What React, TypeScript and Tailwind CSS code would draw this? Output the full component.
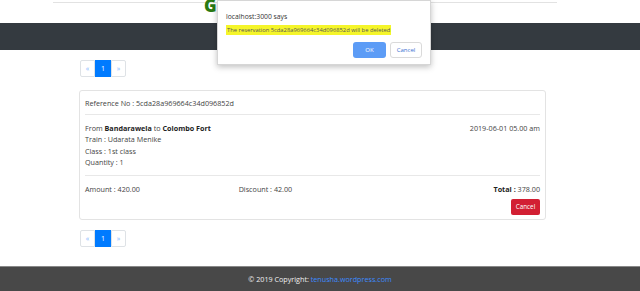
import React from 'react';

const Pagination = () => (
  <div className="flex h-[17px] w-[46px] text-[7px] leading-none">
    <span className="flex w-[15px] items-center justify-center rounded-l-[2px] border border-[#dee2e6] text-[#7fb5ff]">«</span>
    <span className="flex w-[16px] items-center justify-center bg-[#007bff] text-white">1</span>
    <span className="flex w-[15px] items-center justify-center rounded-r-[2px] border border-[#dee2e6] text-[#7fb5ff]">»</span>
  </div>
);

const ConfirmDialog = () => (
  <div className="absolute left-[217px] top-0 h-[65px] w-[214px] border border-[#d6d6d6] bg-white px-[8px] pt-[10px] shadow-[0_2px_6px_rgba(0,0,0,0.25)]">
    <div className="text-[6.8px] leading-[11px] text-[#333]">localhost:3000 says</div>
    <div className="mt-[4px] text-[5.8px] leading-[8px] text-[#555]">
      <span className="bg-[#f5f52a] px-[1px] py-[1px]">The reservation 5cda28a969664c34d096852d will be deleted</span>
    </div>
    <div className="mt-[8px] flex justify-end gap-[4px]">
      <button className="h-[16px] w-[33px] rounded-[3px] bg-[#5c9cf6] text-[6px] text-white">OK</button>
      <button className="h-[16px] w-[32px] rounded-[3px] border border-[#dadada] bg-white text-[6px] text-[#3b6fd0]">Cancel</button>
    </div>
  </div>
);

const App = () => {
  return (
    <div className="relative h-[291px] w-[640px] overflow-hidden bg-white text-[7.2px] text-[#444]" style={{ fontFamily: '"Open Sans", "Noto Sans", sans-serif' }}>
      <div className="flex h-[23px] w-full flex-col">
        <div className="ml-[53px] mt-[2px] h-px w-[504px] shrink-0 bg-[#e2e2e2]" />
        <div className="-mt-[5px] ml-[204px] text-[17px] font-black leading-[16px] text-[#2a7a12]">G</div>
      </div>
      <div className="h-[27px] w-full bg-[#343a40]" />

      <div className="ml-[80px] mt-[10px]">
        <Pagination />
      </div>

      <div className="ml-[79px] mt-[13px] w-[467px] rounded-[3px] border border-[#e3e3e3] px-[5px] pb-[4px]">
        <div className="flex h-[23px] items-center pt-px">Reference No : 5cda28a969664c34d096852d</div>
        <div className="h-px bg-[#e8e8e8]" />
        <div className="flex justify-between pt-[8px] leading-[11.3px]">
          <div>
            <div>From <b className="text-[#222]">Bandarawela</b> to <b className="text-[#222]">Colombo Fort</b></div>
            <div>Train : Udarata Menike</div>
            <div>Class : 1st class</div>
            <div>Quantity : 1</div>
          </div>
          <div>2019-06-01 05.00 am</div>
        </div>
        <div className="mt-[7px] h-px bg-[#e8e8e8]" />
        <div className="grid grid-cols-3 pt-[8px] leading-[11px]">
          <div>Amount : 420.00</div>
          <div className="pl-[2px]">Discount : 42.00</div>
          <div className="text-right"><b className="text-[#222]">Total :</b> 378.00</div>
        </div>
        <div className="mt-[4px] flex justify-end">
          <button className="h-[16px] w-[29px] rounded-[2px] bg-[#d21f33] text-[6.3px] text-white">Cancel</button>
        </div>
      </div>

      <div className="ml-[80px] mt-[10px]">
        <Pagination />
      </div>

      <div className="mt-[19px] flex h-[25px] items-center justify-center border-t border-[#888] bg-[#484848] text-[7.2px] text-[#f0f0f0]">
        <span>© 2019 Copyright: <span className="text-[#3d8bff]">tenusha.wordpress.com</span></span>
      </div>

      <ConfirmDialog />
    </div>
  );
};

export default App;
